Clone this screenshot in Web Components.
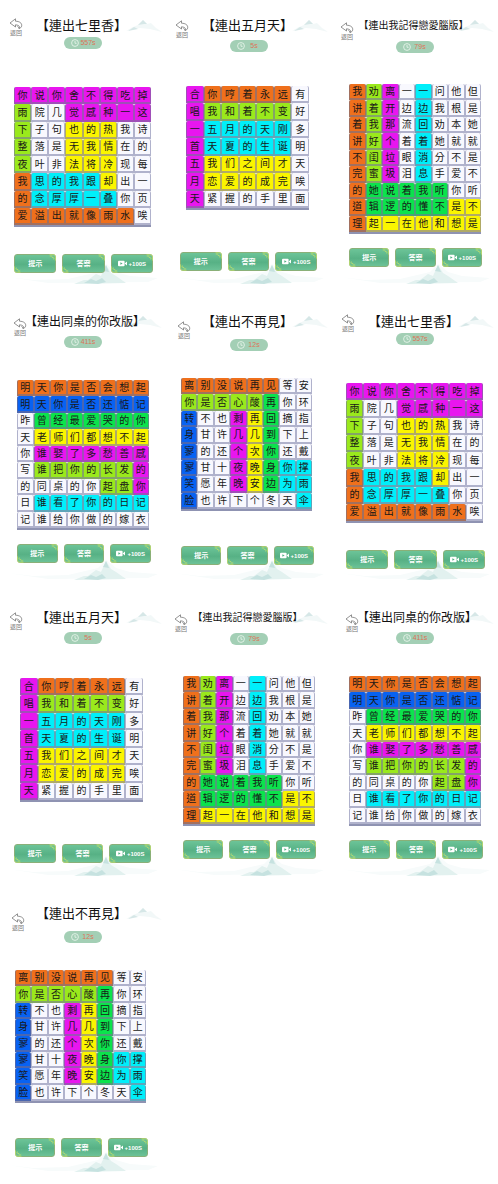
<!DOCTYPE html>
<html lang="zh-Hant">
<head>
<meta charset="utf-8">
<meta name="viewport" content="width=device-width, initial-scale=1">
<title>連出歌詞</title>
<style>
  body { margin: 0; background: #fff; color: #111; font-family: "Liberation Sans", "Noto Sans CJK TC", sans-serif; }
</style>
</head>
<body>
<puzzle-gallery></puzzle-gallery>

<template id="gallery-tpl">
  <style>
    :host { display: grid; grid-template-columns: repeat(3, minmax(0, 1fr)); grid-auto-rows: minmax(296px, auto); }
  </style>
</template>

<template id="card-tpl">
  <style>
    :host { display: block; position: relative; box-sizing: border-box; padding-top: 15px; isolation: isolate; }
    header { display: grid; grid-template-rows: 20px auto; }
    h2 { grid-area: 1 / 1; margin: 0; padding-left: var(--title-shift, 0px); padding-right: 3px; text-align: center; white-space: nowrap;
         font: 400 var(--title-size, 13px)/20px "Noto Sans CJK TC", sans-serif; }
    back-button { grid-area: 1 / 1 / 3 / 2; justify-self: start; align-self: start; margin: var(--back-top) 0 0 var(--back-left); }
    time-pill { grid-area: 2 / 1; justify-self: center; margin: var(--pill-top) 0 0; }
    puzzle-board { margin: var(--board-top) var(--board-right) 0 var(--board-left); }
    nav { display: grid; grid-template-columns: repeat(3, 1fr); gap: 6px; margin: var(--nav-top) var(--nav-right) 0 var(--nav-left); }
    .hills { position: absolute; z-index: -1; }
    .far { right: 4px; top: 16px; width: 36px; height: 18px; }
    .near { left: 8px; top: 260px; height: 26px; width: 150px; }
  </style>
  <svg class="hills far" viewBox="0 0 36 18" aria-hidden="true">
    <path d="M0 15 7 11 12 9 17 4 21 8 25 7 30 12 36 16 24 13 14 12Z" fill="#f2f8f8"/>
    <path d="M12 9 17 4 21 8 18 8Z M2 15 8 11 12 13Z" fill="#d6e7e7"/>
  </svg>
  <svg class="hills near" viewBox="0 0 150 26" preserveAspectRatio="none" aria-hidden="true">
    <path d="M0 17 25 20 60 19 90 12 98 4 108 12 122 16 150 18 140 22 40 23Z" fill="#f7fbfb"/>
    <path d="M66 24 76 20 80 20 88 14 93 16 98 5 103 13 108 16 118 23Z" fill="#e2f1ef"/>
    <path d="M76 23 83 19 88 21 94 18 98 22 90 24Z M95 11 98 5 101 12Z" fill="#c6e2e0"/>
  </svg>
  <header>
    <h2></h2>
    <back-button>返回</back-button>
    <time-pill></time-pill>
  </header>
  <puzzle-board></puzzle-board>
  <nav>
    <green-button>提示</green-button>
    <green-button>答案</green-button>
    <green-button video>+100S</green-button>
  </nav>
</template>

<template id="back-tpl">
  <style>
    :host { display: block; }
    button { display: block; width: 14px; margin: 0; padding: 0; border: 0; background: none; color: #777;
             font: 400 6px/8px "Noto Sans CJK TC", sans-serif; white-space: nowrap; }
    svg { display: block; width: 14px; height: 11px; }
  </style>
  <button type="button">
    <svg viewBox="0 0 14 11" fill="none" stroke="#666" stroke-width=".7" stroke-linejoin="round" aria-hidden="true">
      <path d="M1 5 6.5.8V3.2C10.5 3.3 13 5 12.7 7.8 12.5 9.4 11.3 10.3 9.8 10.4 11 9.3 11 7.2 6.5 6.8V9Z"/>
      <path d="M8.5 8.2 10.5 10.5"/>
    </svg>
    <slot></slot>
  </button>
</template>

<template id="pill-tpl">
  <style>
    :host { display: flex; align-items: center; box-sizing: border-box; width: 38px; height: 12px; padding: 0 5px 0 7px;
            border-radius: 6px; background: #a3cfb5; color: #dc7558; font: 400 7px/12px "Liberation Sans", sans-serif; }
    svg { width: 8px; height: 8px; flex: none; }
    span { flex: 1; text-align: center; white-space: nowrap; }
  </style>
  <svg viewBox="0 0 8 8" fill="none" stroke="#edf8f0" stroke-width=".8" aria-hidden="true">
    <circle cx="4" cy="4" r="3.4"/><path d="M4 2V4.3H5.6"/>
  </svg>
  <span><slot></slot></span>
</template>

<template id="board-tpl">
  <style>
    :host { display: grid; grid-auto-rows: 1fr; box-sizing: border-box; border-bottom: 2px solid #8f93b2; color: #181818;
            font: 400 10px/14px "Noto Sans CJK SC", sans-serif; }
    span { display: flex; align-items: center; justify-content: center; min-width: 0; min-height: 0; overflow: hidden;
           box-sizing: border-box; border: 1px solid var(--edge); border-width: 0 1px 2px; border-radius: 2px 2px 0 0;
           background: var(--face); }
    .M { --face: #e816ef; --edge: #a04fb8; }
    .L { --face: #9ae91c; --edge: #84a468; }
    .Y { --face: #fbf500; --edge: #b0aa66; }
    .O { --face: #ef701c; --edge: #a2705f; }
    .C { --face: #00effa; --edge: #5ea5ba; }
    .G { --face: #0be34c; --edge: #4f9d78; }
    .B { --face: #0862f2; --edge: #4a66b0; }
    .W { --face: #f8f8fe; --edge: #b0b2cc; }
  </style>
</template>

<template id="green-tpl">
  <style>
    :host { display: block; }
    button { position: relative; display: flex; align-items: center; justify-content: center; gap: 2px; width: 100%; height: 19px;
             margin: 0; padding: 0; box-sizing: border-box; border: 1px solid #8ab078; border-radius: 3px; color: #fff;
             background: linear-gradient(#6cc498, #57b185 55%, #6cc297);
             font: 700 7px/10px "Liberation Sans", "Noto Sans CJK TC", sans-serif; white-space: nowrap; }
    :host([video]) button { font-size: 6px; }
    .curl { position: absolute; width: 7px; height: 7px; }
    .tr { right: -1px; top: -1px; }
    .bl { left: -1px; bottom: -1px; transform: rotate(180deg); }
    .cam { display: none; width: 9px; height: 7px; flex: none; }
    :host([video]) .cam { display: block; }
  </style>
  <button type="button">
    <svg class="curl tr" viewBox="0 0 7 7" fill="none" stroke="#b9dc6e" stroke-width=".9" aria-hidden="true">
      <path d="M.5.8H4.5C6 .8 6.4 1.7 6.4 3V6.6M.8 2.6C1.8 1.4 3.4 2 3 3.3M3 3.6C4.4 3 5.4 4.2 4.6 5.4"/>
    </svg>
    <svg class="curl bl" viewBox="0 0 7 7" fill="none" stroke="#b9dc6e" stroke-width=".9" aria-hidden="true">
      <path d="M.5.8H4.5C6 .8 6.4 1.7 6.4 3V6.6M.8 2.6C1.8 1.4 3.4 2 3 3.3M3 3.6C4.4 3 5.4 4.2 4.6 5.4"/>
    </svg>
    <svg class="cam" viewBox="0 0 9 7" aria-hidden="true">
      <rect x="0" y=".8" width="6.6" height="5.4" rx="1" fill="#fff"/>
      <path d="M6.6 3.5 9 1.6V5.4Z" fill="#fff"/>
      <path d="M2.4 2.2 4.6 3.5 2.4 4.8Z" fill="#4fae80"/>
    </svg>
    <slot></slot>
  </button>
</template>

<script>
  // Each puzzle: title, remaining time, lyric rows, colour rows and spacing in px.
  // Colour letters: M magenta, L lime, Y yellow, O orange, C cyan, G green, B blue, W white.
  const PUZZLES = {
    qilixiang: {
      title: "【連出七里香】", time: "557s", ratio: "137 / 140",
      rows: "你说你舍不得吃掉 雨院几觉感种一这 下子句也的热我诗 整落是无我情在的 夜叶非法将冷现每 我思的我跟却出一 的念厚厚一叠你页 爱溢出就像雨水唉",
      colors: "MMMMMMMM LWWMMMMM LWWYYYWW LWWYYYWW LWWYYYWW OCCCCYWW OCCCCCWW OOOOOOOW",
      vars: { "back-top": 3, "back-left": 9, "pill-top": 2, "board-top": 38, "board-left": 14, "board-right": 15, "nav-top": 27, "nav-left": 14, "nav-right": 13 }
    },
    wuyuetian: {
      title: "【連出五月天】", time: "5s", ratio: "123 / 124",
      rows: "合你哼着永远有 唱我和着不变好 一五月的天刚多 首天夏的生诞明 五我们之间才天 月恋爱的成完唉 天紧握的手里面",
      colors: "MOOOOOW MLLLLLW MCCCCCW MCCCCCW MYYYYYW MYYYYYW MWWWWWW",
      vars: { "back-top": 5, "back-left": 9, "pill-top": 5, "board-top": 34, "board-left": 20, "board-right": 23, "nav-top": 42, "nav-left": 14, "nav-right": 15 }
    },
    lianai: {
      title: "【連出我記得戀愛腦版】", time: "79s", ratio: "132 / 150",
      rows: "我劝离一一问他但 讲着开边边我根是 着我那流回劝本她 讲好个着着她就就 不闺垃眼消分不是 完蜜圾泪息手爱不 的她说着我听你听 道辑逻的懂不是不 理起一在他和想是",
      colors: "OLMWCWWW OLMWCWWW OLMWCWWW OLMWCWWW OLMWCWWW OLMWCWWW OGGGGGWW OGGGGGYY OYYYYYYY",
      vars: { "title-size": 10, "back-top": 7, "back-left": 8, "pill-top": 6, "board-top": 31, "board-left": 17, "board-right": 17, "nav-top": 14, "nav-left": 17, "nav-right": 16 }
    },
    tongzhuo: {
      title: "【連出同桌的你改版】", time: "411s", ratio: "132 / 150",
      rows: "明天你是否会想起 明天你是否还惦记 昨曾经最爱哭的你 天老师们都想不起 你谁娶了多愁善感 写谁把你的长发的 的同桌的你起盘你 日谁看了你的日记 记谁给你做的嫁衣",
      colors: "OOOOOOOO BBBBBBBB WGGGGGGG WYYYYYYY WMMMMMMM WLLLLLLM WWWWWLLM WCCCCCCC WWWWWWWW",
      vars: { "title-size": 12, "title-shift": 7, "back-top": 7, "back-left": 13, "pill-top": 5, "board-top": 32, "board-left": 17, "board-right": 17, "nav-top": 14, "nav-left": 17, "nav-right": 15 }
    },
    buzaijian: {
      title: "【連出不再見】", time: "12s", ratio: "131 / 133",
      rows: "离别没说再见等安 你是否心酸再你环 转不也剩再回摘指 身甘许几几到下上 寥的还个次你还戴 寥甘十夜晚身你撑 笑愿年晚安边为雨 脸也许下个冬天伞",
      colors: "OOOOOOWW LLLLLGWW BWWMYGWW BWWMYGWW BWWMYGWW BWWMYGCC BWWMYGCC BWWWWWWC",
      vars: { "back-top": 10, "back-left": 11, "pill-top": 8, "board-top": 27, "board-left": 15, "board-right": 20, "nav-top": 35, "nav-left": 15, "nav-right": 18 }
    }
  };
  const ORDER = ["qilixiang", "wuyuetian", "lianai", "tongzhuo", "buzaijian"];

  class TemplateElement extends HTMLElement {
    constructor() {
      super();
      this.attachShadow({ mode: "open" })
        .append(document.importNode(document.getElementById(this.constructor.template).content, true));
    }
  }

  class BackButton extends TemplateElement { static template = "back-tpl"; }
  class TimePill extends TemplateElement { static template = "pill-tpl"; }
  class GreenButton extends TemplateElement { static template = "green-tpl"; }

  class PuzzleBoard extends TemplateElement {
    static template = "board-tpl";
    set puzzle(p) {
      const rows = p.rows.split(" "), colors = p.colors.split(" ");
      this.style.gridTemplateColumns = `repeat(${rows[0].length}, minmax(0, 1fr))`;
      this.style.aspectRatio = p.ratio;
      rows.forEach((row, y) => [...row].forEach((char, x) => {
        const tile = document.createElement("span");
        tile.className = colors[y][x];
        tile.textContent = char;
        this.shadowRoot.append(tile);
      }));
    }
  }

  class PuzzleCard extends TemplateElement {
    static template = "card-tpl";
    connectedCallback() {
      const p = PUZZLES[this.getAttribute("puzzle")];
      for (const [name, value] of Object.entries(p.vars)) this.style.setProperty("--" + name, value + "px");
      const root = this.shadowRoot;
      root.querySelector("h2").textContent = p.title;
      root.querySelector("time-pill").textContent = p.time;
      root.querySelector("puzzle-board").puzzle = p;
    }
  }

  class PuzzleGallery extends TemplateElement {
    static template = "gallery-tpl";
    connectedCallback() {
      for (const name of [...ORDER, ...ORDER]) {
        const card = document.createElement("puzzle-card");
        card.setAttribute("puzzle", name);
        this.shadowRoot.append(card);
      }
    }
  }

  customElements.define("back-button", BackButton);
  customElements.define("time-pill", TimePill);
  customElements.define("green-button", GreenButton);
  customElements.define("puzzle-board", PuzzleBoard);
  customElements.define("puzzle-card", PuzzleCard);
  customElements.define("puzzle-gallery", PuzzleGallery);
</script>
</body>
</html>
